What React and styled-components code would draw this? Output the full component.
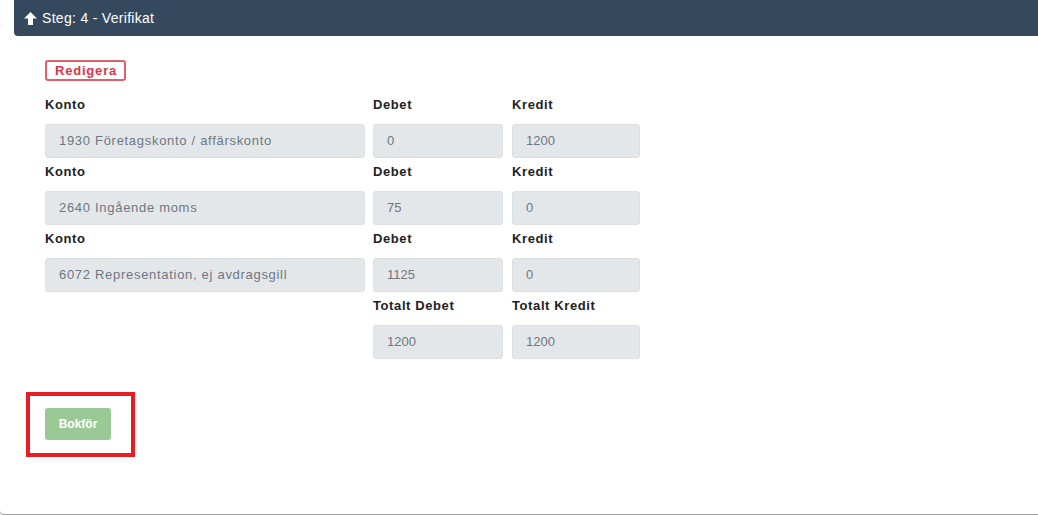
import React from "react";
import styled, { createGlobalStyle } from "styled-components";

const ROWS = [
  { konto: "1930 Företagskonto / affärskonto", debet: "0", kredit: "1200" },
  { konto: "2640 Ingående moms", debet: "75", kredit: "0" },
  { konto: "6072 Representation, ej avdragsgill", debet: "1125", kredit: "0" }
];

const GlobalStyle = createGlobalStyle`
  html, body {
    margin: 0;
    padding: 0;
    background: #fff;
    overflow: hidden;
  }
  body {
    font-family: "Liberation Sans", Arial, sans-serif;
  }
`;

const Page = styled.div`
  width: 1038px;
  height: 515px;
  overflow: hidden;
`;

const Card = styled.div`
  display: flow-root;
  margin-top: 24px;
  width: 1060px;
  height: 490px;
  border-radius: 4px;
  background: #fff;
  box-shadow: 0 1px 1px rgba(0, 0, 0, 0.4), 0 0 1px rgba(0, 0, 0, 0.12);
`;

const Header = styled.div`
  margin-top: -24px;
  margin-left: 14px;
  height: 36px;
  background: #35495e;
  border-bottom-left-radius: 4px;
  display: flex;
  align-items: center;
  gap: 5px;
  padding-left: 10px;
  color: #fff;
  font-size: 14px;
`;

const HeaderTitle = styled.span`
  letter-spacing: 0.3px;
`;

const Body = styled.div`
  padding: 24px 0 0 45px;
`;

const EditButton = styled.button`
  display: block;
  height: 21px;
  padding: 0 7px 0 8px;
  border: 2px solid #e35d6a;
  border-radius: 3px;
  background: #fff;
  color: #dc3545;
  font-family: inherit;
  font-size: 13px;
  font-weight: 700;
  letter-spacing: 0.8px;
  line-height: 17px;
`;

const Grid = styled.div`
  margin-top: 10px;
  display: grid;
  grid-template-columns: 320px 130px 129px;
  column-gap: 8px;
  width: 596px;
  & > *:nth-child(3n + 3) {
    margin-left: 1px;
  }
`;

const Label = styled.div`
  height: 33px;
  padding-top: 5px;
  box-sizing: border-box;
  font-size: 13px;
  font-weight: 700;
  line-height: 18px;
  letter-spacing: 0.6px;
  color: #222;
`;

const Field = styled.div`
  height: 34px;
  box-sizing: border-box;
  border: 1px solid #dde0e3;
  border-radius: 3px;
  background: #e4e7ea;
  color: #6e7780;
  font-size: 13px;
  line-height: 32px;
  padding-left: 13px;
  letter-spacing: ${(p) => (p.wide ? "0.7px" : "0")};
  white-space: nowrap;
`;

const Empty = styled.div``;

const Highlight = styled.div`
  display: inline-block;
  margin: 33px 0 0 -19px;
  border: 4px solid #ec1c24;
  padding: 12px 20px 13px 15px;
`;

const SubmitButton = styled.button`
  display: block;
  width: 66px;
  height: 32px;
  border: none;
  border-radius: 3px;
  background: #9bc995;
  color: #fff;
  font-family: inherit;
  font-size: 12px;
  font-weight: 700;
  padding: 0;
`;

const ArrowUp = () => (
  <svg width="13" height="13" viewBox="0 0 13 13">
    <path d="M6.5 0 L13 6.5 L9 6.5 L9 13 L4 13 L4 6.5 L0 6.5 Z" fill="#fff" />
  </svg>
);

const App = () => (
  <Page>
    <GlobalStyle />
    <Card>
      <Header>
        <ArrowUp />
        <HeaderTitle>Steg: 4 - Verifikat</HeaderTitle>
      </Header>
      <Body>
        <EditButton>Redigera</EditButton>
        <Grid>
          {ROWS.map((row) => (
            <React.Fragment key={row.konto}>
              <Label>Konto</Label>
              <Label>Debet</Label>
              <Label>Kredit</Label>
              <Field wide>{row.konto}</Field>
              <Field>{row.debet}</Field>
              <Field>{row.kredit}</Field>
            </React.Fragment>
          ))}
          <Empty />
          <Label>Totalt Debet</Label>
          <Label>Totalt Kredit</Label>
          <Empty />
          <Field>1200</Field>
          <Field>1200</Field>
        </Grid>
        <Highlight>
          <SubmitButton>Bokför</SubmitButton>
        </Highlight>
      </Body>
    </Card>
  </Page>
);

export default App;
